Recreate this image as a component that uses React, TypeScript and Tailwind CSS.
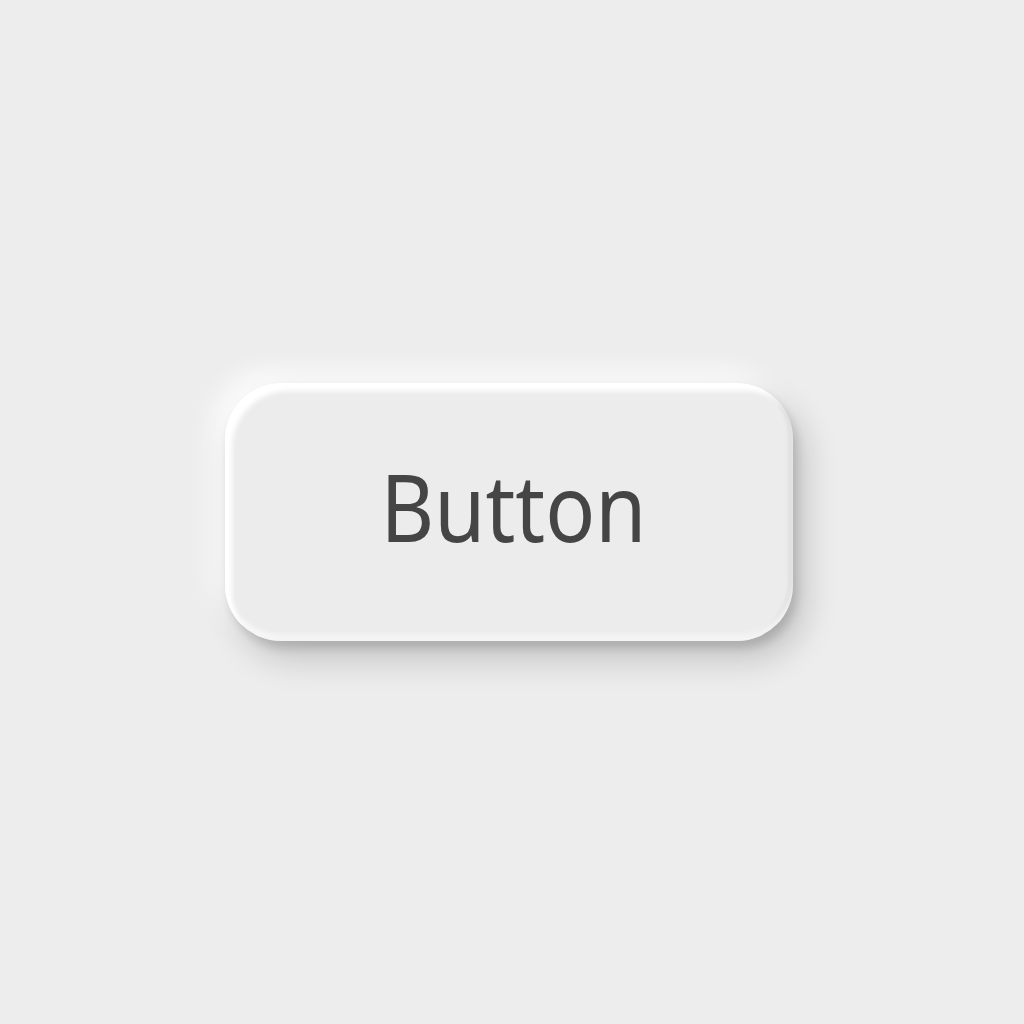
export default function App() {
  return (
    <div className="w-[1024px] h-[1024px] bg-[#ededed] flex items-center justify-center">
      <div className="mt-[-1px] ml-[-6px] w-[568px] h-[258px] rounded-[56px] bg-[#ececec] flex items-center justify-center shadow-[12px_18px_34px_rgba(0,0,0,0.18),4px_7px_10px_rgba(0,0,0,0.14),-12px_-12px_26px_rgba(255,255,255,0.85),inset_8px_9px_5px_-1px_rgba(255,255,255,1),inset_0_-6px_5px_rgba(255,255,255,0.7),inset_-4px_-3px_4px_rgba(0,0,0,0.08)]">
        <span className="font-['Noto_Sans',sans-serif] text-[93px] leading-none text-[#454545] ml-[8px] mt-[-10px] scale-x-[0.89]">
          Button
        </span>
      </div>
    </div>
  );
}
